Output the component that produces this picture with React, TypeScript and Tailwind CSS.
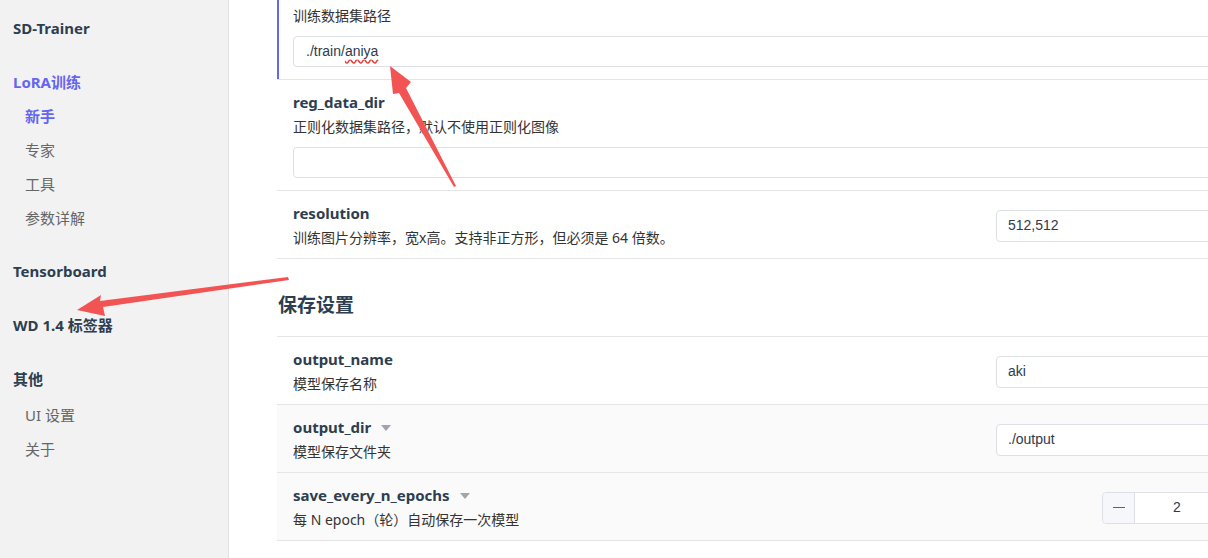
import type { ReactNode } from 'react';

const font = { fontFamily: '"Noto Sans", "Noto Sans CJK SC", sans-serif' };

const SideHead = ({ children, active, className = '' }: { children: ReactNode; active?: boolean; className?: string }) => (
  <div
    className={`h-[34px] flex items-center px-[13px] text-[15px] font-bold ${active ? 'text-[#6466f1]' : 'text-[#2c3e50]'} ${className}`}
  >
    {children}
  </div>
);

const SideItem = ({ children, active, className = '' }: { children: ReactNode; active?: boolean; className?: string }) => (
  <div
    className={`h-[34px] flex items-center pl-[25px] text-[15px] ${active ? 'font-bold text-[#6466f1]' : 'text-[#666]'} ${className}`}
  >
    {children}
  </div>
);

const Caret = () => (
  <svg width="10" height="6" viewBox="0 0 10 6" className="ml-[10px] mt-[2px]">
    <path d="M0 0 L10 0 L5 6 Z" fill="#a0a4ab" />
  </svg>
);

const TextBox = ({ children, className = '' }: { children?: ReactNode; className?: string }) => (
  <div
    className={`h-8 flex items-center px-[11px] border border-[#dcdfe6] rounded-[4px] bg-white text-[14px] text-[#303a4b] ${className}`}
    style={{ fontFamily: '"Liberation Sans", "Noto Sans CJK SC", sans-serif' }}
  >
    {children}
  </div>
);

// row with the control under the description
const BlockRow = ({
  name,
  desc,
  children,
  accent,
}: {
  name?: string;
  desc: string;
  children?: ReactNode;
  accent?: boolean;
}) => (
  <div
    className={`px-4 pt-3 pb-3 border-b border-[#e5e5e5] bg-white ${accent ? 'shadow-[inset_2px_0_0_#6466f1]' : ''}`}
  >
    <div className="h-5 leading-5 text-[15px] font-bold text-[#2c3e50]">{name}</div>
    <div className="mt-[5px] h-5 leading-5 text-[14px] text-[#333]">{desc}</div>
    <TextBox className="mt-[10px] h-[31px]">{children}</TextBox>
  </div>
);

// row with the control on the right
const InlineRow = ({
  name,
  desc,
  caret,
  shaded,
  children,
}: {
  name: string;
  desc: string;
  caret?: boolean;
  shaded?: boolean;
  children: ReactNode;
}) => (
  <div
    className={`flex items-center px-4 pt-3 pb-[10px] border-b border-[#e5e5e5] ${shaded ? 'bg-[#fafafa]' : 'bg-white'}`}
  >
    <div className="flex-1">
      <div className="h-5 leading-5 flex items-center text-[15px] font-bold text-[#2c3e50]">
        {name}
        {caret && <Caret />}
      </div>
      <div className="mt-[5px] h-5 leading-5 text-[14px] text-[#333]">{desc}</div>
    </div>
    <div className="w-[256px] flex justify-end">{children}</div>
  </div>
);

const NumberBox = ({ value }: { value: number }) => (
  <div
    className="w-[150px] h-8 flex border border-[#dcdfe6] rounded-[4px] bg-white text-[14px] text-[#303a4b]"
    style={{ fontFamily: '"Liberation Sans", sans-serif' }}
  >
    <div className="w-[32px] flex items-center justify-center bg-[#f5f7fa] border-r border-[#dcdfe6] rounded-l-[4px]">
      <div className="w-[12px] h-[1px] bg-[#606266]" />
    </div>
    <div className="flex-1 flex items-center justify-center">{value}</div>
    <div className="w-[32px] flex items-center justify-center bg-[#f5f7fa] border-l border-[#dcdfe6] rounded-r-[4px] text-[#606266]">
      +
    </div>
  </div>
);

export default function App() {
  return (
    <div className="w-[1208px] h-[558px] flex overflow-hidden relative bg-white" style={font}>
      {/* Sidebar */}
      <aside className="w-[229px] shrink-0 h-full bg-[#f2f2f2] border-r border-[#e2e2e2]">
        <div className="h-[56px] flex items-center px-[13px] text-[15px] font-bold text-[#2c3e50]">SD-Trainer</div>
        <SideHead active className="mt-[9px]">LoRA训练</SideHead>
        <SideItem active>新手</SideItem>
        <SideItem>专家</SideItem>
        <SideItem>工具</SideItem>
        <SideItem>参数详解</SideItem>
        <SideHead className="mt-[19px]">Tensorboard</SideHead>
        <SideHead className="mt-[20px]">WD 1.4 标签器</SideHead>
        <SideHead className="mt-[20px]">其他</SideHead>
        <SideItem className="mt-[2px]">UI 设置</SideItem>
        <SideItem>关于</SideItem>
      </aside>

      {/* Main */}
      <main className="flex-1 overflow-hidden">
        <div className="w-[991px] ml-[48px] mt-[-31px]">
          <BlockRow accent desc="训练数据集路径">
            <span className="ml-[1px]">./train/</span>
            <span className="underline decoration-wavy decoration-[#e53935] underline-offset-[3px]">aniya</span>
          </BlockRow>
          <BlockRow name="reg_data_dir" desc="正则化数据集路径，默认不使用正则化图像" />
          <InlineRow name="resolution" desc="训练图片分辨率，宽x高。支持非正方形，但必须是 64 倍数。">
            <TextBox className="w-[256px]">512,512</TextBox>
          </InlineRow>

          <div className="h-[78px] pt-[32px] pl-[1px] border-b border-[#e5e5e5]">
            <h2 className="leading-[28px] text-[19px] font-bold text-[#2c3e50]">保存设置</h2>
          </div>

          <InlineRow name="output_name" desc="模型保存名称">
            <TextBox className="w-[256px]">aki</TextBox>
          </InlineRow>
          <InlineRow shaded caret name="output_dir" desc="模型保存文件夹">
            <TextBox className="w-[256px]">./output</TextBox>
          </InlineRow>
          <InlineRow shaded caret name="save_every_n_epochs" desc="每 N epoch（轮）自动保存一次模型">
            <NumberBox value={2} />
          </InlineRow>
        </div>
      </main>

      {/* annotation arrows drawn over the screenshot */}
      <svg className="absolute inset-0 pointer-events-none" width="1208" height="558" viewBox="0 0 1208 558">
        <polygon
          points="390,66 411,82 406,88 456,186 454,187 399,93 393,94"
          fill="#f25454"
        />
        <polygon
          points="77,310 101,295 100,301 288,277 289,280 103,307 105,316"
          fill="#f25454"
        />
      </svg>
    </div>
  );
}
